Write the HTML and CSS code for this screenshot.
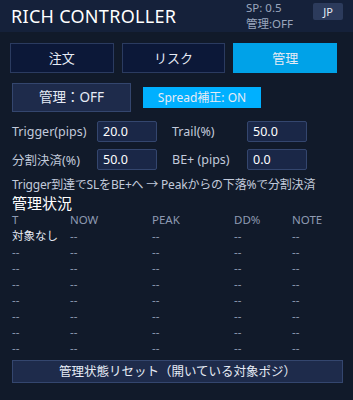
FILE: index.html
```html
<!DOCTYPE html>
<html lang="ja">
<head>
<meta charset="UTF-8" />
<title>RICH CONTROLLER</title>
<link rel="stylesheet" href="styles.css">
</head>
<body>

<div class="header">
    <div class="title">RICH CONTROLLER</div>
    <div class="status">
        <div>SP: 0.5</div>
        <div>管理:OFF</div>
    </div>
    <div class="lang">JP</div>
</div>

<div class="tabs">
    <div class="tab">注文</div>
    <div class="tab">リスク</div>
    <div class="tab active">管理</div>
</div>

<div class="panel">
    <div class="toggles">
        <div class="btn manage">管理：OFF</div>
        <div class="spread">Spread補正: ON</div>
    </div>

    <div class="field-row">
        <span class="label">Trigger(pips)</span>
        <div class="input">20.0</div>
        <span class="label label2">Trail(%)</span>
        <div class="input">50.0</div>
    </div>
    <div class="field-row">
        <span class="label">分割決済(%)</span>
        <div class="input">50.0</div>
        <span class="label label2">BE+ (pips)</span>
        <div class="input">0.0</div>
    </div>

    <div class="note">Trigger到達でSLをBE+へ → Peakからの下落%で分割決済</div>

    <h2>管理状況</h2>
    <div class="table">
        <div class="row head"><span>T</span><span>NOW</span><span>PEAK</span><span>DD%</span><span>NOTE</span></div>
        <div class="row"><span class="first">対象なし</span><span>--</span><span>--</span><span>--</span><span>--</span></div>
        <div class="row"><span>--</span><span>--</span><span>--</span><span>--</span><span>--</span></div>
        <div class="row"><span>--</span><span>--</span><span>--</span><span>--</span><span>--</span></div>
        <div class="row"><span>--</span><span>--</span><span>--</span><span>--</span><span>--</span></div>
        <div class="row"><span>--</span><span>--</span><span>--</span><span>--</span><span>--</span></div>
        <div class="row"><span>--</span><span>--</span><span>--</span><span>--</span><span>--</span></div>
        <div class="row"><span>--</span><span>--</span><span>--</span><span>--</span><span>--</span></div>
        <div class="row"><span>--</span><span>--</span><span>--</span><span>--</span><span>--</span></div>
    </div>

    <div class="btn reset">管理状態リセット（開いている対象ポジ）</div>
</div>

</body>
</html>
```

FILE: styles.css
```css
body {
    font-family: "Noto Sans", "Noto Sans CJK JP", sans-serif;
    background: #111a2a;
    color: #e6ebf5;
    margin: 0;
    width: 353px;
    height: 400px;
    overflow: hidden;
}
.header {
    height: 32px;
    background: #15213a;
    display: flex;
    align-items: center;
    padding: 0 10px 0 11px;
}
.title {
    font-size: 18px;
    color: #ffffff;
    flex: 1;
    letter-spacing: 0.3px;
}
.status {
    font-size: 11.5px;
    line-height: 16px;
    color: #9aa6bd;
    width: 67px;
}
.lang {
    width: 30px;
    height: 17px;
    line-height: 17px;
    text-align: center;
    font-size: 11px;
    background: #2c3b5c;
    border-radius: 2px;
    align-self: flex-start;
    margin-top: 3px;
}
.tabs {
    display: flex;
    gap: 8px;
    margin: 11px 16px 0 10px;
}
.tab {
    flex: 1;
    height: 28px;
    line-height: 28px;
    text-align: center;
    font-size: 13px;
    background: #0c1838;
    border: 1px solid #2b3b60;
}
.tab.active {
    background: #00a2e8;
    border-color: #00a2e8;
}
.panel {
    padding: 0 10px 0 12px;
}
.toggles {
    display: flex;
    align-items: center;
    gap: 12px;
    margin-top: 10px;
}
.btn {
    background: #1e2b4b;
    border: 1px solid #34466e;
    text-align: center;
    box-sizing: border-box;
}
.manage {
    width: 119px;
    height: 29px;
    line-height: 27px;
    font-size: 13.5px;
}
.spread {
    width: 118px;
    height: 21px;
    line-height: 21px;
    text-align: center;
    font-size: 12px;
    background: #00b0ff;
}
.field-row {
    display: flex;
    align-items: center;
    margin-top: 7px;
    font-size: 12.5px;
    color: #c2cadb;
}
.toggles + .field-row {
    margin-top: 9px;
}
.label {
    width: 85px;
}
.label2 {
    width: 75px;
    margin-left: 15px;
}
.input {
    width: 60px;
    height: 21px;
    line-height: 19px;
    box-sizing: border-box;
    padding-left: 5px;
    background: #1a2747;
    border: 1px solid #34466e;
    border-radius: 2px;
    color: #ffffff;
}
.note {
    font-size: 12px;
    color: #c2cadb;
    margin-top: 5px;
    white-space: nowrap;
    letter-spacing: -0.2px;
}
h2 {
    font-size: 15px;
    font-weight: normal;
    margin: 0;
    line-height: 20px;
    color: #ffffff;
}
.table {
    font-size: 11.5px;
    color: #8e9ab2;
}
.row {
    display: grid;
    grid-template-columns: 58px 82px 82px 58px 1fr;
    height: 16px;
    line-height: 16px;
}
.row.head {
    height: 13px;
    line-height: 13px;
    margin-bottom: 2px;
}
.first {
    color: #e6ebf5;
}
.reset {
    width: 331px;
    height: 23px;
    line-height: 21px;
    font-size: 12.5px;
    margin-top: 4px;
}
```
